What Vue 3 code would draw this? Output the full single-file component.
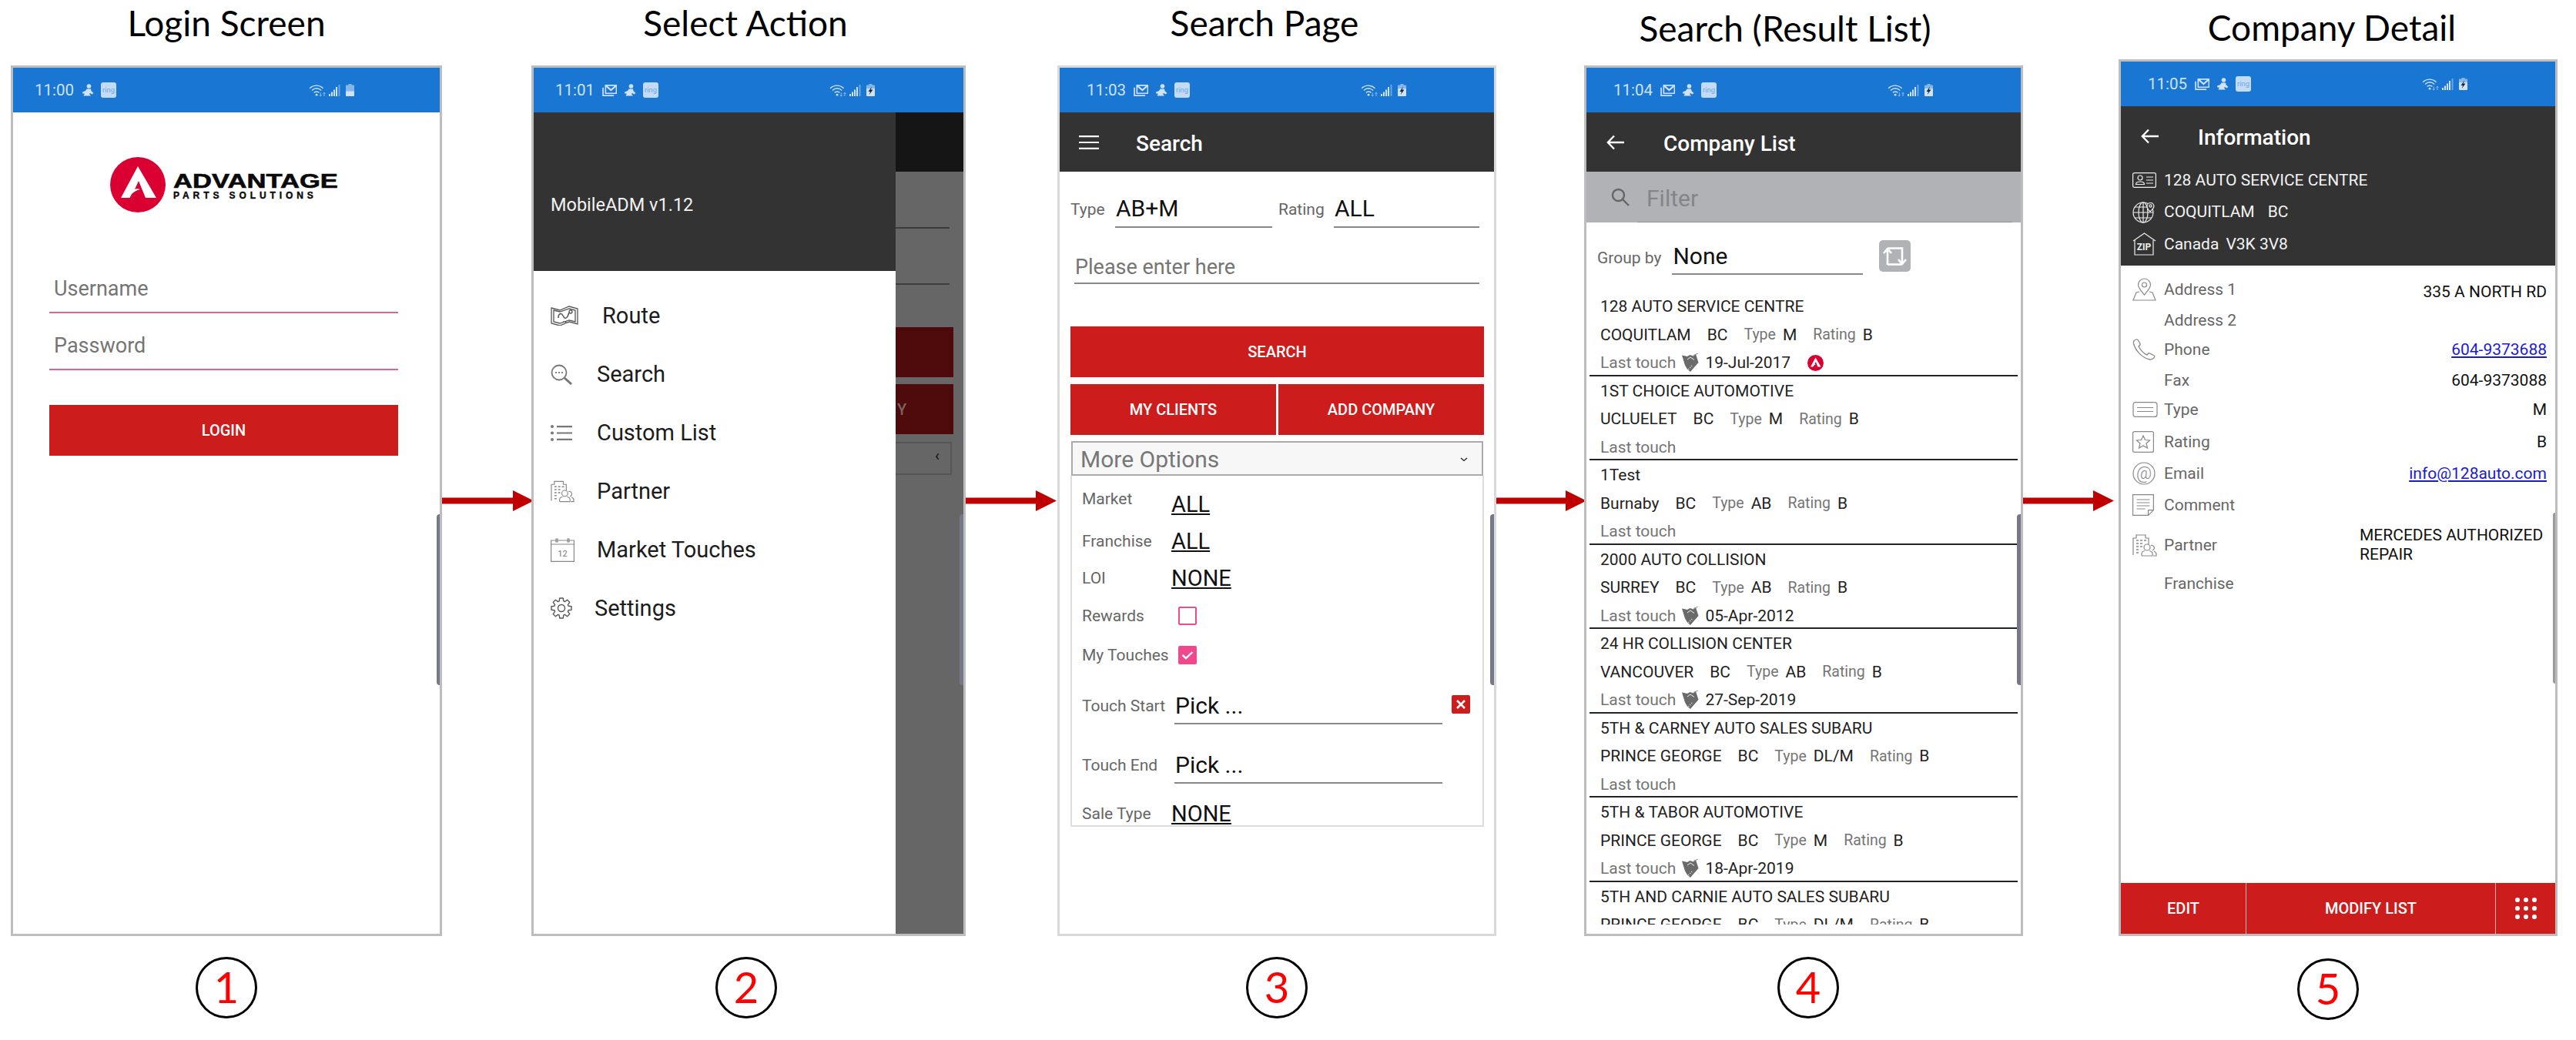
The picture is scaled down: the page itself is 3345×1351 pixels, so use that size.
<template>
  <div class="page">
    <!-- shared little icons -->
    <svg class="sprite" aria-hidden="true">
      <symbol id="i-person" viewBox="0 0 16 16">
        <circle cx="9.500" cy="3" r="2.800" fill="currentColor" />
        <path d="M6.500 6.500h5.500l.5 2.500 3 3-2 1.500-2.500-1.500-1 1 2 2.500H2.500l1.500-3-2.500.2L1 10.500l4-1.500z" fill="currentColor" />
      </symbol>
      <symbol id="i-mail" viewBox="0 0 20 16">
        <path d="M4.500 1h15v11h-15z" fill="none" stroke="currentColor" stroke-width="1.800" />
        <path d="M1 4v11h15" fill="none" stroke="currentColor" stroke-width="1.800" />
        <path d="M5 1.500l7 6 7-6" fill="none" stroke="currentColor" stroke-width="2.200" />
      </symbol>
      <symbol id="i-wifi" viewBox="0 0 24 18">
        <g fill="none" stroke="currentColor" stroke-width="1.500">
          <path d="M1 6c5.500-5 13-5 18.500 0" />
          <path d="M4 9c4-3.500 9-3.500 13 0" />
          <path d="M7 12c2.500-2 4.500-2 7 0" />
        </g>
        <circle cx="10.500" cy="15" r="1.500" fill="currentColor" />
        <path d="M16 12v5M14.500 15.500l1.500 1.500 1.500-1.500M21 17v-5M19.500 13.500l1.500-1.500 1.500 1.500" fill="none" stroke="currentColor" stroke-width="1" opacity=".7" />
      </symbol>
      <symbol id="i-signal" viewBox="0 0 15 16">
        <path d="M0 13h2v3H0zM3 10.500h2V16H3zM6 7.500h2V16H6zM9 4h2v12H9z" fill="currentColor" />
        <path d="M12.500 1h2v15h-2z" fill="currentColor" opacity=".45" />
      </symbol>
      <symbol id="i-battery" viewBox="0 0 11 16">
        <path d="M3.500 0h4v1.500h-4zM1 1.500h9q1 0 1 1V15q0 1-1 1H1q-1 0-1-1V2.500q0-1 1-1z" fill="currentColor" opacity=".6" />
        <path d="M0 9.500h11V15q0 1-1 1H1q-1 0-1-1z" fill="currentColor" />
      </symbol>
      <symbol id="i-charge" viewBox="0 0 11 16">
        <path d="M3.500 0h4v1.500h-4zM1 1.500h9q1 0 1 1V6H0V2.500q0-1 1-1z" fill="currentColor" opacity=".6" />
        <path d="M0 6h11v9q0 1-1 1H1q-1 0-1-1z" fill="currentColor" />
        <path d="M7 3.500L2.500 10H5l-1.200 4L8.500 7.500H5.800z" fill="#1c2b3a" />
      </symbol>
      <symbol id="i-logo" viewBox="0 0 72 72">
        <circle cx="36" cy="36" r="36" fill="#db0032" />
        <path d="M36 12L14 53h11.500l2.500-5c3-3 7-5 11-6l-4-1-3 1 5-11 9 22h14z" fill="#fff" />
        <path d="M34 44l6-2-2 5-7 5-4 1z" fill="#db0032" />
      </symbol>
      <symbol id="i-deal" viewBox="0 0 22 24">
        <path d="M0 2.500l7 1.500 3.500-2 4.500 1.500L18 1l3.500 11-4.500 5-6 7-4-3.500-3-5z" fill="#6a6a6a" />
        <path d="M15 2.500L21 0" fill="none" stroke="#888" stroke-width="1" />
        <path d="M7 8l4-3 5 3.500M8 20l1.500 1M10 18l1.500 1M12 16l1.500 1" fill="none" stroke="#fff" stroke-width=".9" />
      </symbol>
      <symbol id="i-partner" viewBox="0 0 32 30">
        <g fill="none" stroke="currentColor" stroke-width="1.200">
          <path d="M1 28V6h4V2h12v4h4v8" />
          <path d="M5 9h3M10 9h3M15 9h3M5 13h3M10 13h3M5 17h3M10 17h3M5 21h3M5 25h3" stroke-width="1.600" />
          <circle cx="19" cy="18" r="4" />
          <path d="M12 29v-3c0-2 2-3 4-3.500M26 29v-3c0-2-2-3-4-3.500M12 29h14" />
          <path d="M24 15.500a3 3 0 1 1 2 6.500" />
          <path d="M27 29h4v-2c0-2-1-3-3-4" />
        </g>
      </symbol>
    </svg>

    <template v-for="(s, idx) in screens" :key="s.key">
      <section class="col" :class="'col-' + s.key">
        <h2 class="title">{{ s.title }}</h2>

        <div class="phone">
          <div class="status" :class="{ wide: idx > 1 }">
            <div class="status-left">
              <span class="time">{{ s.time }}</span>
              <svg v-if="s.mail" class="st-mail"><use href="#i-mail" /></svg>
              <svg class="st-person"><use href="#i-person" /></svg>
              <span class="ring">ring</span>
            </div>
            <svg class="st-wifi"><use href="#i-wifi" /></svg>
            <svg class="st-signal"><use href="#i-signal" /></svg>
            <svg class="st-batt"><use :href="s.charging ? '#i-charge' : '#i-battery'" /></svg>
          </div>

          <!-- 1: login -->
          <div v-if="s.key === 'login'" class="login">
            <div class="logo">
              <svg class="logo-mark"><use href="#i-logo" /></svg>
              <div class="logo-text">
                <div class="logo-name">ADVANTAGE</div>
                <div class="logo-sub">PARTS SOLUTIONS</div>
              </div>
            </div>
            <div class="login-field">Username</div>
            <div class="login-field second">Password</div>
            <div class="btn login-btn">LOGIN</div>
          </div>

          <!-- 2: drawer over the search page -->
          <div v-else-if="s.key === 'action'" class="drawer-wrap">
            <div class="drawer">
              <div class="drawer-head">MobileADM v1.12</div>
              <div class="menu">
                <div v-for="m in menu" :key="m.label" class="menu-row">
                  <div class="menu-icon" :style="{ width: m.indent + 'px' }">
                    <svg v-if="m.icon === 'route'" width="36" height="26" viewBox="0 0 36 26" fill="none" stroke="#555" stroke-width="1.300">
                      <path d="M1 3l11 3 12-5 11 3v20l-11-3-12 5-11-3z" />
                      <path d="M4 6l8 2 12-4 8 2v15l-8-2-12 4-8-2z" />
                      <path d="M10 16c0-6 4-7 6-3s4 5 6 1 1-5 3-5" stroke-width="1.600" />
                      <circle cx="26" cy="8" r="2" />
                      <path d="M16 21l9 1" stroke-dasharray="1.500 1.500" />
                    </svg>
                    <svg v-else-if="m.icon === 'search'" width="28" height="27" viewBox="0 0 28 27" fill="none">
                      <circle cx="11" cy="11" r="9.500" stroke="#777" stroke-width="1.800" />
                      <path d="M18 18l9 8" stroke="#777" stroke-width="3" />
                      <circle cx="7" cy="11" r="1" fill="#555" />
                      <circle cx="11" cy="11" r="1" fill="#555" />
                      <circle cx="15" cy="11" r="1" fill="#555" />
                    </svg>
                    <svg v-else-if="m.icon === 'list'" width="28" height="21" viewBox="0 0 28 21" fill="#777">
                      <circle cx="2" cy="2" r="2" />
                      <circle cx="2" cy="10.500" r="2" />
                      <circle cx="2" cy="19" r="2" />
                      <path d="M8 1h20v2.200H8zM8 9.400h20v2.200H8zM8 17.800h20V20H8z" />
                    </svg>
                    <svg v-else-if="m.icon === 'partner'" class="ic-partner" width="31" height="30"><use href="#i-partner" /></svg>
                    <svg v-else-if="m.icon === 'calendar'" width="31" height="31" viewBox="0 0 31 31" fill="none" stroke="#888" stroke-width="1.200">
                      <path d="M.6 3h29.800v27.400H.6zM.6 8h29.800" />
                      <path d="M7 1h2v4H7zM22 1h2v4h-2z" />
                      <text x="15.500" y="24" text-anchor="middle" class="cal-num">12</text>
                    </svg>
                    <svg v-else width="28" height="28" viewBox="0 0 28 28" fill="none" stroke="#555" stroke-width="1.400" stroke-linejoin="round">
                      <path :d="gearPath" />
                      <circle cx="14" cy="14" r="4.500" />
                    </svg>
                  </div>
                  <span class="menu-label">{{ m.label }}</span>
                </div>
              </div>
            </div>
            <div class="backdrop">
              <div class="bd-bar"></div>
              <div class="bd-line first"></div>
              <div class="bd-line"></div>
              <div class="bd-red first"></div>
              <div class="bd-red"><span>Y</span></div>
              <div class="bd-more"><span>‹</span></div>
            </div>
          </div>

          <!-- 3: search form -->
          <template v-else-if="s.key === 'search'">
            <div class="toolbar">
              <svg class="nav" width="26" height="18" viewBox="0 0 26 18" fill="#fff">
                <path d="M0 0h26v2.200H0zM0 7.900h26v2.200H0zM0 15.800h26V18H0z" />
              </svg>
              <span class="toolbar-title">Search</span>
            </div>
            <div class="search-form">
              <div class="form-row">
                <span class="lbl lbl-type">Type</span>
                <span class="field field-type">AB+M</span>
                <span class="lbl lbl-rating">Rating</span>
                <span class="field field-rating">ALL</span>
              </div>
              <div class="field field-enter">Please enter here</div>
              <div class="btn btn-search">SEARCH</div>
              <div class="btn-pair">
                <div class="btn">MY CLIENTS</div>
                <div class="btn">ADD COMPANY</div>
              </div>
              <div class="more">
                <span>More Options</span>
                <svg width="10" height="6" viewBox="0 0 10 6" fill="none" stroke="#222" stroke-width="1.300"><path d="M1 1l4 3.500L9 1" /></svg>
              </div>
              <div class="options">
                <div class="opt opt-market"><span class="opt-lbl">Market</span><u>ALL</u></div>
                <div class="opt"><span class="opt-lbl">Franchise</span><u>ALL</u></div>
                <div class="opt"><span class="opt-lbl">LOI</span><u>NONE</u></div>
                <div class="opt opt-check"><span class="opt-lbl">Rewards</span><span class="check"></span></div>
                <div class="opt opt-check tall">
                  <span class="opt-lbl">My Touches</span>
                  <span class="check on">
                    <svg width="20" height="16" viewBox="0 0 20 16" fill="none" stroke="#fff" stroke-width="2.400"><path d="M3.500 8l4.500 4 8.500-8" /></svg>
                  </span>
                </div>
                <div class="opt opt-pick start">
                  <span class="opt-lbl">Touch Start</span>
                  <span class="pick">Pick ...</span>
                  <span class="clear">
                    <svg width="14" height="14" viewBox="0 0 14 14" stroke="#fff" stroke-width="2.600"><path d="M2 2l10 10M12 2L2 12" /></svg>
                  </span>
                </div>
                <div class="opt opt-pick end">
                  <span class="opt-lbl">Touch End</span>
                  <span class="pick">Pick ...</span>
                </div>
                <div class="opt opt-sale"><span class="opt-lbl">Sale Type</span><u>NONE</u></div>
              </div>
            </div>
          </template>

          <!-- 4: result list -->
          <template v-else-if="s.key === 'list'">
            <div class="toolbar">
              <svg class="nav back" width="23" height="20" viewBox="0 0 23 20" fill="none" stroke="#fff" stroke-width="2.300">
                <path d="M23 10H2M10 1.500L1.800 10l8.200 8.500" />
              </svg>
              <span class="toolbar-title">Company List</span>
            </div>
            <div class="filter">
              <svg width="24" height="24" viewBox="0 0 24 24" fill="none" stroke="#666" stroke-width="2.400">
                <circle cx="9.500" cy="9.500" r="7.500" /><path d="M15 15l8 8" />
              </svg>
              <span class="filter-text">Filter</span>
              <div class="filter-line"></div>
            </div>
            <div class="group-row">
              <span class="lbl">Group by</span>
              <span class="field field-group">None</span>
              <span class="group-btn">
                <svg width="33" height="28" viewBox="0 0 33 28" fill="none" stroke="#fff" stroke-width="2.600">
                  <path d="M7 25V5M2 10l5-6 5 6" />
                  <path d="M8 3.500h18V23" />
                  <path d="M21 18l5 6 5-6" />
                  <path d="M7 24.500h18" />
                </svg>
              </span>
            </div>
            <div class="results">
              <div v-for="r in results" :key="r.name" class="result">
                <div class="res-line">{{ r.name }}</div>
                <div class="res-line">
                  <span>{{ r.city }}</span>
                  <span class="gap">BC</span>
                  <span class="gap muted small">Type</span>
                  <span class="gap-s">{{ r.type }}</span>
                  <span class="gap muted small">Rating</span>
                  <span class="gap-s">B</span>
                </div>
                <div class="res-line">
                  <span class="muted">Last touch</span>
                  <template v-if="r.touch">
                    <svg class="deal"><use href="#i-deal" /></svg>
                    <span>{{ r.touch }}</span>
                  </template>
                  <svg v-if="r.badge" class="badge"><use href="#i-logo" /></svg>
                </div>
              </div>
            </div>
          </template>

          <!-- 5: company detail -->
          <template v-else>
            <div class="detail-head">
              <div class="toolbar">
                <svg class="nav back" width="23" height="20" viewBox="0 0 23 20" fill="none" stroke="#fff" stroke-width="2.300">
                  <path d="M23 10H2M10 1.500L1.800 10l8.200 8.500" />
                </svg>
                <span class="toolbar-title">Information</span>
              </div>
              <div class="head-row">
                <svg width="31" height="20" viewBox="0 0 31 20" fill="none" stroke="#eee" stroke-width="1.200">
                  <rect x=".6" y=".6" width="29.800" height="18.800" rx="2" />
                  <circle cx="10" cy="7" r="3" />
                  <path d="M4.500 15.500c0-3 3-3.500 5.500-3.500s5.500.5 5.500 3.500zM18 6h9M18 10h9M18 14h9" />
                </svg>
                <span>128 AUTO SERVICE CENTRE</span>
              </div>
              <div class="head-row">
                <svg width="31" height="30" viewBox="0 0 31 30" fill="none" stroke="#eee" stroke-width="1.200">
                  <circle cx="14" cy="16" r="13" />
                  <ellipse cx="14" cy="16" rx="6" ry="13" />
                  <path d="M14 3v26M1 16h26M3 9h22M3 23h22" />
                  <path d="M23 15c-3-3-4-5-4-7a4.500 4.500 0 0 1 9 0c0 2-2 4-5 7z" fill="#333" />
                  <circle cx="23.500" cy="7.500" r="1.600" />
                </svg>
                <span>COQUITLAM<span class="head-gap">BC</span></span>
              </div>
              <div class="head-row">
                <svg width="31" height="30" viewBox="0 0 31 30" fill="none" stroke="#eee" stroke-width="1.200">
                  <path d="M1 11L15.500 1 30 11M3 10v19h24V10" />
                  <text x="15" y="23" text-anchor="middle" class="zip">ZIP</text>
                </svg>
                <span>Canada<span class="head-gap tight">V3K 3V8</span></span>
              </div>
            </div>
            <div class="info">
              <div v-for="row in info" :key="row.label" class="info-row" :style="{ height: row.h + 'px' }">
                <div class="info-icon">
                  <svg v-if="row.icon === 'pin'" width="31" height="30" viewBox="0 0 31 30" fill="none" stroke="#888" stroke-width="1.200">
                    <path d="M15.500 22c-5-6-8-9-8-13a8 8 0 0 1 16 0c0 4-3 7-8 13z" />
                    <circle cx="15.500" cy="9" r="3" />
                    <path d="M9 18l-4 1-4 10h29l-4-10-4-1" />
                  </svg>
                  <svg v-else-if="row.icon === 'phone'" width="30" height="28" viewBox="0 0 30 28" fill="none" stroke="#888" stroke-width="1.300">
                    <path d="M5 1C2 2 1 4 1.500 6c2 9 11 19 21 21 2 .5 5-1 6-3 .5-1 0-2-1-2.500l-5-2.500c-1-.5-2 0-2.500 1l-1 1c-4-1-9-7-11-11l1.500-1.500c.8-.8.800-1.500.3-2.500L7.500 2C7 1 6 .7 5 1z" />
                  </svg>
                  <svg v-else-if="row.icon === 'type'" width="33" height="20" viewBox="0 0 33 20" fill="none" stroke="#888" stroke-width="1.200">
                    <path d="M4 .6h25a3 3 0 0 1 3 3v12.800a3 3 0 0 1-3 3H4a3 3 0 0 1-3-3V3.600a3 3 0 0 1 3-3z" />
                    <path d="M6 7.500h21M6 12.500h21" />
                  </svg>
                  <svg v-else-if="row.icon === 'star'" width="28" height="28" viewBox="0 0 28 28" fill="none" stroke="#888" stroke-width="1.200">
                    <rect x=".6" y=".6" width="26.800" height="26.800" rx="2" />
                    <path d="M14 6l2.500 5.500 6 .5-4.500 4 1.500 6L14 19l-5.500 3 1.500-6-4.500-4 6-.5z" />
                  </svg>
                  <svg v-else-if="row.icon === 'at'" width="30" height="30" viewBox="0 0 30 30" fill="none" stroke="#888" stroke-width="1.200">
                    <circle cx="15" cy="15" r="14" />
                    <text x="15" y="22" text-anchor="middle" class="at">@</text>
                  </svg>
                  <svg v-else-if="row.icon === 'note'" width="28" height="28" viewBox="0 0 28 28" fill="none" stroke="#888" stroke-width="1.200">
                    <path d="M.6.6h26.800v20l-6.800 6.800H.6zM27.400 20.600h-6.800v6.800" />
                    <path d="M5.500 7h17M5.500 11h17M5.500 15h17M5.500 19h11" />
                  </svg>
                  <svg v-else-if="row.icon === 'partner'" class="ic-partner" width="32" height="30"><use href="#i-partner" /></svg>
                </div>
                <span class="info-label">{{ row.label }}</span>
                <a v-if="row.link" class="info-value link">{{ row.value }}</a>
                <span v-else-if="row.value" class="info-value" :class="row.cls">{{ row.value }}</span>
              </div>
            </div>
            <div class="action-bar">
              <div class="btn edit">EDIT</div>
              <div class="btn modify">MODIFY LIST</div>
              <div class="btn dots">
                <i v-for="n in 9" :key="n"></i>
              </div>
            </div>
          </template>

          <div class="scroll-thumb"></div>
        </div>

        <div class="step">{{ idx + 1 }}</div>
      </section>

      <div v-if="idx < screens.length - 1" class="arrow" :class="'arrow-' + idx">
        <svg width="100%" height="27" preserveAspectRatio="none" :viewBox="'0 0 ' + arrowLen[idx] + ' 27'">
          <path :d="'M0 9.500H' + (arrowLen[idx] - 27) + 'V0L' + arrowLen[idx] + ' 13.500 ' + (arrowLen[idx] - 27) + ' 27V17.500H0z'" fill="#c00000" />
        </svg>
      </div>
    </template>
  </div>
</template>

<script setup>
const screens = [
  { key: 'login', title: 'Login Screen', time: '11:00', mail: false, charging: false },
  { key: 'action', title: 'Select Action', time: '11:01', mail: true, charging: true },
  { key: 'search', title: 'Search Page', time: '11:03', mail: true, charging: true },
  { key: 'list', title: 'Search (Result List)', time: '11:04', mail: true, charging: true },
  { key: 'detail', title: 'Company Detail', time: '11:05', mail: true, charging: true }
]

const arrowLen = [121, 120, 120, 121]

// 8 toothed outline for the settings icon
const gearPoints = []
for (let i = 0; i < 8; i++) {
  const a = (i * Math.PI) / 4
  for (const [r, da] of [[9.500, -0.3], [13.200, -0.17], [13.200, 0.17], [9.500, 0.3]]) {
    gearPoints.push((14 + r * Math.cos(a + da)).toFixed(2) + ' ' + (14 + r * Math.sin(a + da)).toFixed(2))
  }
}
const gearPath = 'M' + gearPoints.join('L') + 'z'

const menu = [
  { label: 'Route', icon: 'route', indent: 67 },
  { label: 'Search', icon: 'search', indent: 60 },
  { label: 'Custom List', icon: 'list', indent: 60 },
  { label: 'Partner', icon: 'partner', indent: 60 },
  { label: 'Market Touches', icon: 'calendar', indent: 60 },
  { label: 'Settings', icon: 'gear', indent: 57 }
]

const results = [
  { name: '128 AUTO SERVICE CENTRE', city: 'COQUITLAM', type: 'M', touch: '19-Jul-2017', badge: true },
  { name: '1ST CHOICE AUTOMOTIVE', city: 'UCLUELET', type: 'M' },
  { name: '1Test', city: 'Burnaby', type: 'AB' },
  { name: '2000 AUTO COLLISION', city: 'SURREY', type: 'AB', touch: '05-Apr-2012' },
  { name: '24 HR COLLISION CENTER', city: 'VANCOUVER', type: 'AB', touch: '27-Sep-2019' },
  { name: '5TH & CARNEY AUTO SALES SUBARU', city: 'PRINCE GEORGE', type: 'DL/M' },
  { name: '5TH & TABOR AUTOMOTIVE', city: 'PRINCE GEORGE', type: 'M', touch: '18-Apr-2019' },
  { name: '5TH AND CARNIE AUTO SALES SUBARU', city: 'PRINCE GEORGE', type: 'DL/M' }
]

const info = [
  { label: 'Address 1', icon: 'pin', value: '335 A NORTH RD', cls: 'lower', h: 40 },
  { label: 'Address 2', h: 38 },
  { label: 'Phone', icon: 'phone', value: '604-9373688', link: true, h: 40 },
  { label: 'Fax', value: '604-9373088', h: 38 },
  { label: 'Type', icon: 'type', value: 'M', h: 42 },
  { label: 'Rating', icon: 'star', value: 'B', h: 41 },
  { label: 'Email', icon: 'at', value: 'info@128auto.com', link: true, h: 41 },
  { label: 'Comment', icon: 'note', h: 52 },
  { label: 'Partner', icon: 'partner', value: 'MERCEDES AUTHORIZED REPAIR', cls: 'wrap', h: 50 },
  { label: 'Franchise', h: 40 }
]
</script>

<style>
html, body {
  background: #fff;
}
</style>

<style scoped>
.page {
  display: flex;
  width: 3345px;
  height: 1351px;
  padding-left: 14px;
  box-sizing: border-box;
  font-family: Roboto, "Liberation Sans", sans-serif;
  overflow: hidden;
}
.sprite {
  display: none;
}

/* columns */
.col {
  flex: none;
  width: 570px;
  display: flex;
  flex-direction: column;
}
.col-login { width: 560px; }
.col-action { width: 564px; }

.title {
  margin: 0;
  height: 85px;
  padding-top: 4px;
  box-sizing: border-box;
  text-align: center;
  font: 400 46px/52px Lato, "Liberation Sans", sans-serif;
  color: #000;
  white-space: nowrap;
}
.col-action .title { margin-left: -8px; margin-right: 0; }
.col-search .title { margin-right: 32px; }
.col-list .title { margin-right: 48px; padding-top: 11px; }
.col-detail .title { height: 77px; margin-right: 16px; padding-top: 10px; }

.phone {
  position: relative;
  height: 1131px;
  box-sizing: border-box;
  border: 3px solid #bdbdbd;
  display: flex;
  flex-direction: column;
  overflow: hidden;
  background: #fff;
}
.col-search .phone { border-color: #d9d9d9; }
.col-detail .phone { height: 1139px; }

.step {
  width: 74px;
  height: 74px;
  margin: 27px auto 0;
  border: 3px solid #000;
  border-radius: 50%;
  text-align: center;
  font: 400 56px/72px Lato, "Liberation Sans", sans-serif;
  color: #f00;
}
.col-action .step { position: relative; left: -3px; }
.col-list .step { position: relative; left: 6px; }
.col-detail .step { position: relative; left: -13px; margin-top: 29px; }

.arrow {
  flex: none;
  height: 27px;
  margin-top: 637px;
}
.arrow svg { display: block; }
.arrow-0 { width: 121px; margin-left: -2px; margin-right: -3px; }
.arrow-1 { width: 120px; margin-left: -2px; margin-right: 1px; }
.arrow-2 { width: 120px; margin-left: -3px; margin-right: -3px; }
.arrow-3 { width: 121px; margin-left: -3px; margin-right: 6px; }

/* status bar */
.status {
  flex: none;
  height: 58px;
  padding-left: 28px;
  background: #1976d2;
  display: flex;
  align-items: center;
  color: #cfe2f7;
}
.status.wide { padding-left: 35px; }
.status-left {
  width: 356px;
  display: flex;
  align-items: center;
  gap: 9px;
}
.time {
  font-size: 20.500px;
  margin-right: 1px;
}
.st-mail { width: 19px; height: 15px; }
.st-person { width: 16px; height: 16px; }
.ring {
  width: 20px;
  height: 20px;
  border-radius: 3px;
  background: #c4dbf6;
  color: #6fa6e4;
  font-size: 9.500px;
  line-height: 19px;
  text-align: center;
}
.st-wifi { width: 23px; height: 17px; margin-right: 3px; }
.st-signal { width: 15px; height: 16px; margin-right: 7px; }
.st-batt { width: 11px; height: 16px; }

/* shared bits */
.toolbar {
  flex: none;
  height: 77px;
  background: #333;
  display: flex;
  align-items: center;
  color: #fff;
}
.nav { flex: none; margin-left: 25px; }
.nav.back { margin-left: 26px; }
.toolbar-title {
  margin-left: 48px;
  padding-top: 3px;
  font-size: 28px;
  font-weight: 500;
}
.toolbar .back + .toolbar-title { margin-left: 51px; }
.detail-head .toolbar { height: 75px; padding-top: 2px; box-sizing: border-box; }
.btn {
  height: 66px;
  background: #cc1c1c;
  color: #fff;
  font-size: 20px;
  font-weight: 500;
  display: flex;
  align-items: center;
  justify-content: center;
}
.lbl {
  color: #666;
  font-size: 21px;
}
.field {
  box-sizing: border-box;
  border-bottom: 2px solid #888;
  color: #111;
  font-size: 30px;
  line-height: 48px;
  height: 49px;
  padding-left: 1px;
}

/* 1 login */
.login {
  flex: 1;
  padding: 58px 54px 0 47px;
}
.logo {
  display: flex;
  align-items: center;
  margin-left: 79px;
  gap: 10px;
}
.logo-mark { width: 72px; height: 72px; flex: none; }
.logo-text {
  width: 216px;
  color: #0a0a0a;
  font-family: "Liberation Sans", sans-serif;
  font-weight: 700;
  white-space: nowrap;
  margin-top: 4px;
}
.logo-name {
  font-size: 26px;
  line-height: 24px;
  transform: scaleX(1.33);
  transform-origin: left;
  -webkit-text-stroke: .6px #0a0a0a;
}
.logo-sub {
  font-size: 12px;
  line-height: 14px;
  letter-spacing: 4.900px;
  -webkit-text-stroke: .4px #0a0a0a;
}
.login-field {
  box-sizing: border-box;
  height: 65px;
  margin-top: 66px;
  padding-left: 6px;
  border-bottom: 2px solid #d9668c;
  color: #757575;
  font-size: 27px;
  line-height: 66px;
}
.login-field.second { margin-top: 9px; }
.login-btn { margin-top: 45px; }

/* 2 drawer */
.drawer-wrap {
  flex: 1;
  display: flex;
  min-height: 0;
}
.drawer {
  flex: none;
  width: 470px;
  background: #fff;
}
.drawer-head {
  height: 206px;
  box-sizing: border-box;
  padding: 102px 0 0 22px;
  background: #333;
  color: #f2f2f2;
  font-size: 23.500px;
  line-height: 36px;
}
.menu { padding-top: 20px; }
.menu-row {
  height: 76px;
  padding-left: 22px;
  display: flex;
  align-items: center;
}
.menu-icon { display: flex; flex: none; }
.menu-label {
  color: #1c1c1c;
  font-size: 29px;
}
.ic-partner { color: #888; }
.cal-num {
  font: 400 11px Roboto, sans-serif;
  fill: #777;
  stroke: none;
}
.backdrop {
  flex: 1;
  background: #666;
  overflow: hidden;
}
.bd-bar { height: 77px; background: #151515; }
.bd-line {
  height: 2px;
  margin: 71px 18px 0 0;
  background: #3d3d3d;
}
.bd-line.first { margin-top: 72px; }
.bd-red {
  height: 65px;
  margin: 9px 13px 0 0;
  background: #4f0b0b;
  color: #7a6464;
  font-size: 20px;
  font-weight: 500;
  line-height: 66px;
  padding-left: 2px;
}
.bd-red.first { margin-top: 55px; }
.bd-more {
  height: 43px;
  box-sizing: border-box;
  margin: 10px 15px 0 0;
  border: 2px solid #555;
  border-left: 0;
  color: #111;
  font-size: 20px;
  line-height: 32px;
  text-align: right;
  padding-right: 14px;
}

/* 3 search */
.search-form { flex: 1; min-height: 0; }
.form-row {
  display: flex;
  align-items: center;
  margin-top: 24px;
  padding-left: 14px;
}
.lbl-type { width: 58px; }
.field-type { width: 204px; }
.lbl-rating { margin-left: 8px; width: 72px; }
.field-rating { width: 189px; }
.field-enter {
  margin: 24px 19px 0 19px;
  color: #757575;
  font-size: 27px;
  line-height: 54px;
  padding-left: 1px;
}
.btn-search { margin: 55px 13px 0 14px; }
.btn-pair {
  display: flex;
  gap: 3px;
  margin: 9px 13px 0 14px;
}
.btn-pair .btn { flex: 1; }
.more {
  box-sizing: border-box;
  height: 45px;
  margin: 8px 14px 0 15px;
  padding: 2px 18px 0 10px;
  background: #f7f7f7;
  border: 2px solid #aaa;
  display: flex;
  align-items: center;
  justify-content: space-between;
  color: #777;
  font-size: 30px;
}
.options {
  box-sizing: border-box;
  height: 456px;
  margin: 0 13px 0 14px;
  padding: 13px 0 0 13px;
  border: 2px solid #ddd;
  border-top: 0;
  overflow: hidden;
}
.opt {
  height: 48px;
  display: flex;
  align-items: center;
  font-size: 29px;
  color: #111;
}
.opt u { text-underline-offset: 2px; }
.opt-lbl {
  flex: none;
  width: 116px;
  color: #666;
  font-size: 21px;
}
.opt-market .opt-lbl { margin-bottom: 14px; }
.opt-check { height: 50px; }
.opt-check.tall { height: 52px; }
.check {
  box-sizing: border-box;
  width: 24px;
  height: 24px;
  margin-left: 9px;
  border: 2px solid #f0488a;
  border-radius: 2px;
  display: flex;
  align-items: center;
  justify-content: center;
}
.check.on { background: #f0488a; }
.opt-pick { margin-top: 16px; }
.opt-pick.end { margin-top: 29px; }
.pick {
  box-sizing: border-box;
  width: 348px;
  height: 48px;
  margin-left: 4px;
  padding-left: 1px;
  border-bottom: 2px solid #888;
  line-height: 47px;
  font-size: 30px;
}
.clear {
  width: 24px;
  height: 24px;
  margin: -4px 0 0 12px;
  border-radius: 2px;
  background: #cc1c1c;
  display: flex;
  align-items: center;
  justify-content: center;
}
.opt-sale { margin-top: 15px; }

/* 4 list */
.filter {
  position: relative;
  flex: none;
  height: 66px;
  padding-left: 32px;
  background: #b1b2b6;
  display: flex;
  align-items: center;
}
.filter-text {
  margin-left: 22px;
  color: #83858a;
  font-size: 30px;
  margin-top: 2px;
}
.filter-line {
  position: absolute;
  left: 66px;
  right: 11px;
  bottom: 0;
  height: 1px;
  background: #8d8f92;
}
.group-row {
  flex: none;
  display: flex;
  align-items: center;
  margin-top: 23px;
  padding-left: 14px;
  height: 45px;
}
.field-group {
  width: 248px;
  height: 45px;
  line-height: 42px;
  margin-left: 14px;
}
.group-btn {
  width: 41px;
  height: 41px;
  margin: -4px 0 0 21px;
  border-radius: 5px;
  background: #b1b2b6;
  display: flex;
  align-items: center;
  justify-content: center;
}
.results {
  height: 822px;
  margin: 22px 4px 0;
  overflow: hidden;
}
.result {
  box-sizing: border-box;
  height: 109.500px;
  padding-left: 14px;
  border-bottom: 2px solid #222;
}
.res-line {
  box-sizing: border-box;
  height: 36.500px;
  padding-top: 2px;
  display: flex;
  align-items: center;
  color: #222;
  font-size: 21px;
  white-space: nowrap;
}
.muted { color: #757575; }
.small { font-size: 19.500px; }
.gap { margin-left: 21px; }
.gap-s { margin-left: 9px; }
.deal { width: 22px; height: 24px; margin: 0 8px 0 8px; }
.badge { width: 21px; height: 21px; margin-left: 22px; }

/* 5 detail */
.detail-head {
  flex: none;
  height: 207px;
  background: #333;
  color: #f2f2f2;
  font-size: 21px;
}
.head-row {
  height: 41.500px;
  padding-left: 15px;
  display: flex;
  align-items: center;
  gap: 10px;
}
.head-row svg { flex: none; }
.head-gap { margin-left: 17px; }
.head-gap.tight { margin-left: 9px; }
.zip {
  font: 700 12px Roboto, sans-serif;
  fill: #eee;
  stroke: none;
}
.at {
  font: 300 22px Roboto, sans-serif;
  fill: #888;
  stroke: none;
}
.info {
  flex: 1;
  padding: 11px 11px 0 15px;
}
.info-row {
  display: flex;
  align-items: flex-start;
  font-size: 21px;
}
.info-icon {
  flex: none;
  width: 41px;
  height: 40px;
  display: flex;
  align-items: center;
}
.info-label {
  color: #666;
  line-height: 40px;
}
.info-value {
  margin-left: auto;
  color: #111;
  line-height: 40px;
  white-space: nowrap;
}
.info-value.lower { padding-top: 3px; }
.info-value.wrap {
  width: 243px;
  white-space: normal;
  line-height: 25px;
  margin-top: -5px;
}
.link { color: #1a1ad6; text-decoration: underline; }
.action-bar {
  flex: none;
  display: flex;
  gap: 1px;
  background: #e8b4b4;
}
.edit { width: 162px; }
.modify { flex: 1; }
.dots {
  width: 77px;
  display: grid;
  grid-template-columns: repeat(3, 6px);
  grid-auto-rows: 6px;
  gap: 5px;
  align-items: stretch;
  align-content: center;
  justify-content: center;
}
.dots i {
  border-radius: 50%;
  background: #fff;
}

.scroll-thumb {
  position: absolute;
  right: 0;
  top: 580px;
  width: 5px;
  height: 222px;
  border-radius: 4px 0 0 4px;
  background: #77778a;
}
.col-login .scroll-thumb { width: 4px; }
.col-detail .scroll-thumb {
  width: 3px;
  top: 586px;
  background: #9a9aa4;
}
</style>
